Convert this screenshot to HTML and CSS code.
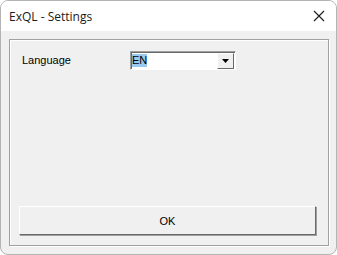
FILE: index.html
```html
<!DOCTYPE html>
<html lang="en">
  <head>
    <meta charset="utf-8">
    <title>ExQL - Settings</title>
    <link rel="stylesheet" href="styles.css">
  </head>
  <body>
    <div class="window">
      <div class="titlebar">
        <span class="title">ExQL - Settings</span>
        <button class="close-btn" aria-label="Close">
          <svg width="12" height="12" viewBox="0 0 12 12">
            <path d="M1 1 L11 11 M11 1 L1 11" stroke="#1a1a1a" stroke-width="1.1" fill="none"/>
          </svg>
        </button>
      </div>
      <div class="client">
        <div class="frame">
          <div class="row">
            <label class="label">Language</label>
            <div class="combo">
              <span class="combo-text"><span class="selected">EN</span></span>
              <span class="combo-btn">
                <svg width="7" height="4" viewBox="0 0 7 4"><path d="M0 0 H7 L3.5 4 Z" fill="#000"/></svg>
              </span>
            </div>
          </div>
          <button class="ok-btn">OK</button>
        </div>
      </div>
    </div>
  </body>
</html>
```

FILE: styles.css
```css
html, body {
  margin: 0;
  padding: 0;
  background: #ffffff;
}

body {
  width: 337px;
  height: 255px;
  font-family: "Liberation Sans", Arial, sans-serif;
}

.window {
  box-sizing: border-box;
  width: 337px;
  height: 255px;
  border: 1px solid #b4b4b4;
  border-radius: 8px;
  overflow: hidden;
  display: flex;
  flex-direction: column;
  background: #f0f0f0;
}

.titlebar {
  height: 30px;
  background: #ffffff;
  display: flex;
  align-items: center;
  justify-content: space-between;
  padding-left: 8px;
}

.title {
  font-family: "Open Sans", "Noto Sans", sans-serif;
  font-size: 12px;
  color: #1a1a1a;
}

.close-btn {
  width: 40px;
  height: 30px;
  border: none;
  background: transparent;
  display: flex;
  align-items: center;
  justify-content: center;
  padding: 0 0 1px 6px;
}

.client {
  flex: 1;
  padding: 8px 8px 8px 8px;
  display: flex;
}

.frame {
  flex: 1;
  border: 1px solid #a0a0a0;
  box-shadow: inset 1px 1px 0 #ffffff, 1px 1px 0 #ffffff;
  display: flex;
  flex-direction: column;
  justify-content: space-between;
  padding: 10px 12px 10px 9px;
}

.row {
  display: flex;
  align-items: center;
  height: 20px;
  padding-left: 3px;
}

.label {
  font-size: 11px;
  color: #000;
  width: 108px;
}

.combo {
  box-sizing: border-box;
  width: 106px;
  height: 19px;
  background: #fff;
  border: 1px solid;
  border-color: #a0a0a0 #ffffff #ffffff #a0a0a0;
  box-shadow: inset 1px 1px 0 #696969;
  display: flex;
}

.combo-text {
  flex: 1;
  font-size: 11px;
  display: flex;
  align-items: center;
  padding-left: 1px;
  padding-top: 1px;
}

.selected {
  background: #99c9ef;
  color: #000;
  line-height: 13px;
}

.combo-btn {
  box-sizing: border-box;
  width: 17px;
  margin: 1px 1px 0 0;
  background: #f0f0f0;
  border: 1px solid;
  border-color: #ffffff #696969 #696969 #ffffff;
  display: flex;
  align-items: center;
  justify-content: center;
}

.ok-btn {
  box-sizing: border-box;
  width: 297px;
  height: 29px;
  margin-left: 0;
  background: #f0f0f0;
  border: 1px solid;
  border-color: #ffffff #696969 #696969 #ffffff;
  box-shadow: 1px 1px 0 #a0a0a0;
  font-family: "Liberation Sans", Arial, sans-serif;
  font-size: 11px;
  color: #000;
  padding: 0;
}
```
